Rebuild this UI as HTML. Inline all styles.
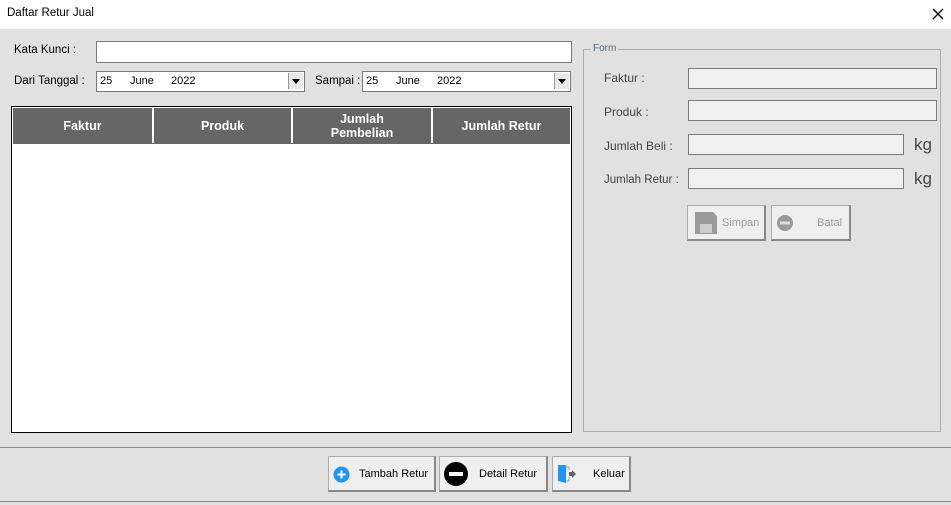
<!DOCTYPE html><html><head><style>
body{margin:0;width:951px;height:505px;background:#e1e1e1;font-family:"Liberation Sans",sans-serif;font-size:11.5px;color:#000;position:relative;overflow:hidden}
.a{position:absolute;white-space:nowrap}
.in{position:absolute;background:#fff;border:1px solid #7a7a7a;box-sizing:border-box}
.fi{position:absolute;background:#f0f0f0;border:1px solid #7a7a7a;box-sizing:border-box}
.dd{position:absolute;background:#fff;border:1px solid #7a7a7a;box-sizing:border-box;font-size:11px}
.dd span{position:absolute;top:3px}
.arr{position:absolute;right:1px;top:1px;width:14px;height:16px;background:#e8e8e8;border-left:1px solid #999}
.arr:after{content:"";position:absolute;left:3px;top:6px;border:4px solid transparent;border-top:5px solid #000}
.th{position:absolute;top:0;height:35px;color:#fff;font-weight:bold;font-size:12.5px;display:flex;align-items:center;justify-content:center;text-align:center;line-height:14px;border-right:2px solid #fff;box-sizing:border-box}
.btn{position:absolute;background:#efefef;border:1px solid #adadad;border-right:2px solid #888;border-bottom:2px solid #888;box-sizing:border-box;font-size:11.5px;white-space:nowrap}
.lbl{position:absolute;color:#444;font-size:12px;white-space:nowrap}
</style></head><body>
<div class="a" style="left:0;top:0;width:951px;height:29px;background:#fff"></div>
<div class="a" style="left:7px;top:7px;font-size:11.5px">Daftar Retur Jual</div>
<svg class="a" style="left:932px;top:8px" width="12" height="12"><path d="M1 1L11 11M11 1L1 11" stroke="#000" stroke-width="1.3"/></svg>

<div class="a" style="left:14px;top:44px">Kata Kunci :</div>
<div class="in" style="left:96px;top:41px;width:476px;height:22px"></div>
<div class="a" style="left:14px;top:75px">Dari Tanggal :</div>
<div class="dd" style="left:96px;top:71px;width:209px;height:21px"><span style="left:3px">25</span><span style="left:33px">June</span><span style="left:74px">2022</span><div class="arr"></div></div>
<div class="a" style="left:315px;top:75px">Sampai :</div>
<div class="dd" style="left:362px;top:71px;width:209px;height:21px"><span style="left:3px">25</span><span style="left:33px">June</span><span style="left:74px">2022</span><div class="arr"></div></div>

<div class="a" style="left:11px;top:106px;width:561px;height:327px;border:1px solid #000;box-sizing:border-box;background:#fff">
<div class="a" style="left:1px;top:1px;width:557px;height:36px;background:#666">
<div class="th" style="left:0;width:141px">Faktur</div>
<div class="th" style="left:141px;width:139px">Produk</div>
<div class="th" style="left:280px;width:140px">Jumlah<br>Pembelian</div>
<div class="th" style="left:420px;width:137px;border:none">Jumlah Retur</div>
</div></div>

<div class="a" style="left:583px;top:49px;width:358px;height:383px;border:1px solid #adadad;box-sizing:border-box"></div>
<div class="a" style="left:591px;top:43px;background:#e1e1e1;padding:0 2px;font-size:10px;color:#4d6a8a">Form</div>
<div class="lbl" style="left:604px;top:71px">Faktur :</div>
<div class="fi" style="left:688px;top:68px;width:249px;height:21px"></div>
<div class="lbl" style="left:604px;top:105px">Produk :</div>
<div class="fi" style="left:688px;top:100px;width:249px;height:21px"></div>
<div class="lbl" style="left:604px;top:139px">Jumlah Beli :</div>
<div class="fi" style="left:688px;top:134px;width:216px;height:21px"></div>
<div class="a" style="left:914px;top:135px;font-size:17px;color:#444">kg</div>
<div class="lbl" style="left:604px;top:174px;font-size:11.5px">Jumlah Retur :</div>
<div class="fi" style="left:688px;top:168px;width:216px;height:21px"></div>
<div class="a" style="left:914px;top:169px;font-size:17px;color:#444">kg</div>
<div class="btn" style="left:687px;top:205px;width:79px;height:36px"><svg class="a" style="left:6px;top:5px" width="24" height="24"><path d="M1 1h18l4 4v18H1z" fill="#9a9a9a"/><rect x="6" y="13" width="12" height="9" fill="#ccc"/></svg><span class="a" style="left:34px;top:11px;color:#9a9a9a;font-size:11px">Simpan</span></div>
<div class="btn" style="left:771px;top:205px;width:80px;height:36px"><svg class="a" style="left:5px;top:9px" width="16" height="16"><circle cx="8" cy="8" r="8" fill="#9a9a9a"/><rect x="3" y="6.5" width="10" height="3" fill="#ddd"/></svg><span class="a" style="left:45px;top:11px;color:#9a9a9a;font-size:11px">Batal</span></div>

<div class="a" style="left:0;top:447px;width:951px;height:1px;background:#888"></div>
<div class="a" style="left:0;top:501px;width:951px;height:1px;background:#888"></div>
<div class="btn" style="left:328px;top:456px;width:108px;height:36px"><svg class="a" style="left:4px;top:9px" width="17" height="17"><circle cx="8.5" cy="8.5" r="8" fill="#2196f3"/><path d="M8.5 4.5v8M4.5 8.5h8" stroke="#fff" stroke-width="2"/></svg><span class="a" style="left:30px;top:11px;font-size:11px">Tambah Retur</span></div>
<div class="btn" style="left:439px;top:456px;width:109px;height:36px"><svg class="a" style="left:4px;top:5px" width="24" height="24"><circle cx="12" cy="12" r="12"/><rect x="5" y="10" width="14" height="4" fill="#fff"/></svg><span class="a" style="left:39px;top:11px;font-size:11px">Detail Retur</span></div>
<div class="btn" style="left:552px;top:456px;width:79px;height:36px"><svg class="a" style="left:4px;top:7px" width="20" height="20"><path d="M1 1h8v18l-8-2z" fill="#2196f3"/><path d="M9 3h3v3M9 17h3v-4" stroke="#7ab" fill="none"/><path d="M12 8h3V6l4 4-4 4v-2h-3z" fill="#666"/></svg><span class="a" style="left:40px;top:11px;font-size:11px">Keluar</span></div>
</body></html>
